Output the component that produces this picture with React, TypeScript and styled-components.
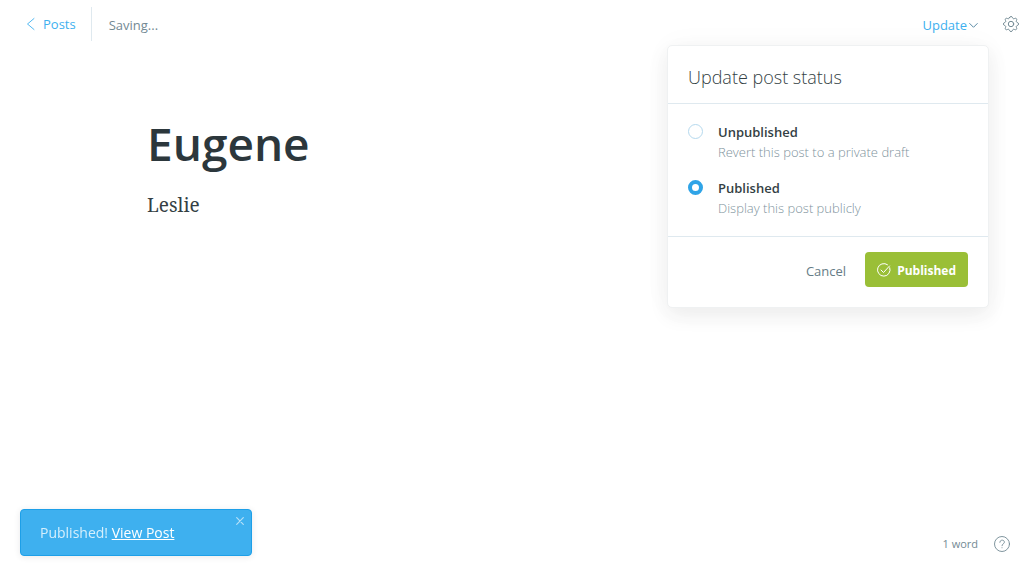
import React, { useState } from "react";
import styled, { createGlobalStyle } from "styled-components";

const GlobalStyle = createGlobalStyle`
  *, *::before, *::after { box-sizing: border-box; }
  body {
    margin: 0;
    background: #fff;
    color: #343f44;
    font: 13px/20px "Open Sans", "Noto Sans", sans-serif;
  }
  button { font: inherit; margin: 0; padding: 0; border: 0; background: none; cursor: pointer; }
  svg { display: block; flex: none; fill: none; stroke: currentColor; stroke-linecap: round; stroke-linejoin: round; }
`;

const Page = styled.div`
  display: flex;
  flex-direction: column;
  min-height: 100vh;
`;

const Header = styled.header`
  display: flex;
  align-items: center;
  justify-content: space-between;
  height: 48px;
  padding: 0 15px 0 26px;
`;

const HeaderGroup = styled.div<{ $gap: number }>`
  display: flex;
  align-items: center;
  gap: ${(p) => p.$gap}px;
`;

const BackLink = styled.a`
  display: flex;
  align-items: center;
  gap: 7px;
  height: 34px;
  padding-right: 15px;
  border-right: 1px solid #dfe9ef;
  color: #3eb0ef;
  text-decoration: none;
`;

const Status = styled.span`
  padding-top: 2px;
  color: #738a94;
`;

const MenuAnchor = styled.div`
  position: relative;
`;

const MenuToggle = styled.button`
  display: flex;
  align-items: center;
  gap: 2px;
  padding-top: 2px;
  color: #3eb0ef;
  svg { color: #5b8ba5; }
`;

const IconButton = styled.button`
  display: flex;
  color: #738a94;
`;

const Menu = styled.form`
  position: absolute;
  top: 32px;
  right: -11px;
  z-index: 2;
  width: 322px;
  border: 1px solid #eff1f2;
  border-radius: 5px;
  background: #fff;
  box-shadow: 0 8px 20px rgba(39, 44, 49, 0.07), 0 0 30px rgba(39, 44, 49, 0.03);
`;

const MenuTitle = styled.h2`
  margin: 0;
  padding: 19px 20px 14px;
  border-bottom: 1px solid #dfe9ef;
  color: #343f44;
  font-size: 18px;
  font-weight: 300;
  line-height: 24px;
`;

const Options = styled.div`
  display: flex;
  flex-direction: column;
  gap: 16px;
  padding: 18px 20px;
  border-bottom: 1px solid #dfe9ef;
`;

const Option = styled.label`
  display: grid;
  grid-template-columns: 15px 1fr;
  column-gap: 15px;
  cursor: pointer;
`;

const Radio = styled.input`
  appearance: none;
  width: 15px;
  height: 15px;
  margin: 2px 0 0;
  border: 1px solid #b5d9ee;
  border-radius: 50%;
  background: #fff;
  &:checked { border: 4px solid #2fa4e7; }
`;

const OptionText = styled.span`
  display: flex;
  flex-direction: column;
`;

const OptionName = styled.span`
  color: #343f44;
  font-weight: 600;
`;

const OptionHint = styled.span`
  color: #80939d;
  font-weight: 300;
`;

const MenuFooter = styled.div`
  display: flex;
  align-items: center;
  justify-content: flex-end;
  gap: 19px;
  padding: 15px 20px 20px;
`;

const CancelButton = styled.button`
  padding-top: 2px;
  color: #667c86;
`;

const PublishButton = styled.button`
  display: flex;
  align-items: center;
  gap: 6px;
  height: 35px;
  padding: 0 12px;
  border-radius: 4px;
  background: #9abf37;
  color: #fff;
  font-size: 12px;
  font-weight: 700;
`;

const PublishLabel = styled.span`
  padding-top: 2px;
`;

const Editor = styled.main`
  flex: 1;
  padding: 63px 147px 0;
`;

const Title = styled.h1`
  margin: 0;
  color: #2c373c;
  font-size: 46px;
  font-weight: 600;
  line-height: 64px;
`;

const Body = styled.p`
  margin: 16px 0 0;
  color: #343f44;
  font: 19px/28px "Noto Serif", Georgia, "Liberation Serif", serif;
`;

const Footer = styled.footer`
  display: flex;
  align-items: center;
  justify-content: flex-end;
  gap: 16px;
  padding: 0 24px 24px;
  color: #738a94;
  font-size: 11px;
  line-height: 16px;
`;

const Toast = styled.div`
  position: fixed;
  bottom: 20px;
  left: 20px;
  display: flex;
  align-items: flex-start;
  justify-content: space-between;
  width: 232px;
  padding: 7px 7px 6px 19px;
  border: 1px solid #1d9fe8;
  border-radius: 4px;
  background: #3eb0ef;
  box-shadow: 0 1px 6px rgba(39, 44, 49, 0.1);
  color: #d5effc;
`;

const ToastText = styled.p`
  margin: 6px 0;
  font-size: 14px;
  a { color: #fff; }
`;

const CloseButton = styled(IconButton)`
  color: #b5e0f8;
`;

export default function App() {
  const [status, setStatus] = useState("published");
  return (
    <Page>
      <GlobalStyle />
      <Header>
        <HeaderGroup $gap={17}>
          <BackLink href="#posts">
            <svg width="10" height="14" viewBox="0 0 10 14" aria-hidden="true">
              <path d="M8 1.5 1.5 7 8 12.5" strokeWidth="0.9" />
            </svg>
            Posts
          </BackLink>
          <Status>Saving...</Status>
        </HeaderGroup>
        <HeaderGroup $gap={25}>
          <MenuAnchor>
            <MenuToggle type="button" aria-expanded="true">
              Update
              <svg width="9" height="8" viewBox="0 0 9 8" aria-hidden="true">
                <path d="M.7 2.5 4.5 6.3 8.300 2.500" />
              </svg>
            </MenuToggle>
            <Menu onSubmit={(e) => e.preventDefault()}>
              <MenuTitle>Update post status</MenuTitle>
              <Options>
                <Option>
                  <Radio type="radio" name="status" checked={status === "draft"} onChange={() => setStatus("draft")} />
                  <OptionText>
                    <OptionName>Unpublished</OptionName>
                    <OptionHint>Revert this post to a private draft</OptionHint>
                  </OptionText>
                </Option>
                <Option>
                  <Radio type="radio" name="status" checked={status === "published"} onChange={() => setStatus("published")} />
                  <OptionText>
                    <OptionName>Published</OptionName>
                    <OptionHint>Display this post publicly</OptionHint>
                  </OptionText>
                </Option>
              </Options>
              <MenuFooter>
                <CancelButton type="button">Cancel</CancelButton>
                <PublishButton type="submit">
                  <svg width="14" height="14" viewBox="0 0 14 14" aria-hidden="true">
                    <path d="M12.8 4.8A6.300 6.300 0 1 1 10.500 1.700" />
                    <path d="M4 7 6.500 9.500 12.500 3" />
                  </svg>
                  <PublishLabel>Published</PublishLabel>
                </PublishButton>
              </MenuFooter>
            </Menu>
          </MenuAnchor>
          <IconButton type="button" aria-label="Settings">
            <svg width="16" height="16" viewBox="0 0 16 16" aria-hidden="true">
              <path
                d="M6.400 1.700C6.700.1 9.300.1 9.600 1.700c.2 1 1.200 1.400 2 .8 1.300-.9 2.800.6 1.900 1.900-.6.8-.2 1.800.8 2 1.600.3 1.600 2.900 0 3.200-1 .2-1.400 1.200-.8 2 .9 1.300-.6 2.800-1.900 1.900-.8-.6-1.800-.2-2 .8-.3 1.600-2.900 1.600-3.200 0-.2-1-1.200-1.400-2-.8-1.300.9-2.800-.6-1.900-1.900.6-.8.2-1.800-.8-2-1.600-.3-1.600-2.900 0-3.200 1-.2 1.400-1.200.8-2-.9-1.300.6-2.800 1.900-1.900.8.6 1.800.2 2-.8Z"
              />
              <circle cx="8" cy="8" r="2.700" />
            </svg>
          </IconButton>
        </HeaderGroup>
      </Header>
      <Editor>
        <Title>Eugene</Title>
        <Body>Leslie</Body>
      </Editor>
      <Footer>
        <span>1 word</span>
        <IconButton type="button" aria-label="Help">
          <svg width="16" height="16" viewBox="0 0 16 16" aria-hidden="true">
            <circle cx="8" cy="8" r="7.500" strokeWidth="0.9" />
            <path d="M5.800 6.300C5.800 3.300 10.400 3.500 10.400 6.200 10.400 7.900 8 7.700 8 9.700M8 11.700v.1" strokeWidth="0.9" />
          </svg>
        </IconButton>
      </Footer>
      <Toast role="status">
        <ToastText>
          Published! <a href="#post">View Post</a>
        </ToastText>
        <CloseButton type="button" aria-label="Close">
          <svg width="8" height="8" viewBox="0 0 8 8" aria-hidden="true">
            <path d="m.7.7 6.600 6.600M7.300.7.7 7.300" strokeWidth="1.2" />
          </svg>
        </CloseButton>
      </Toast>
    </Page>
  );
}
